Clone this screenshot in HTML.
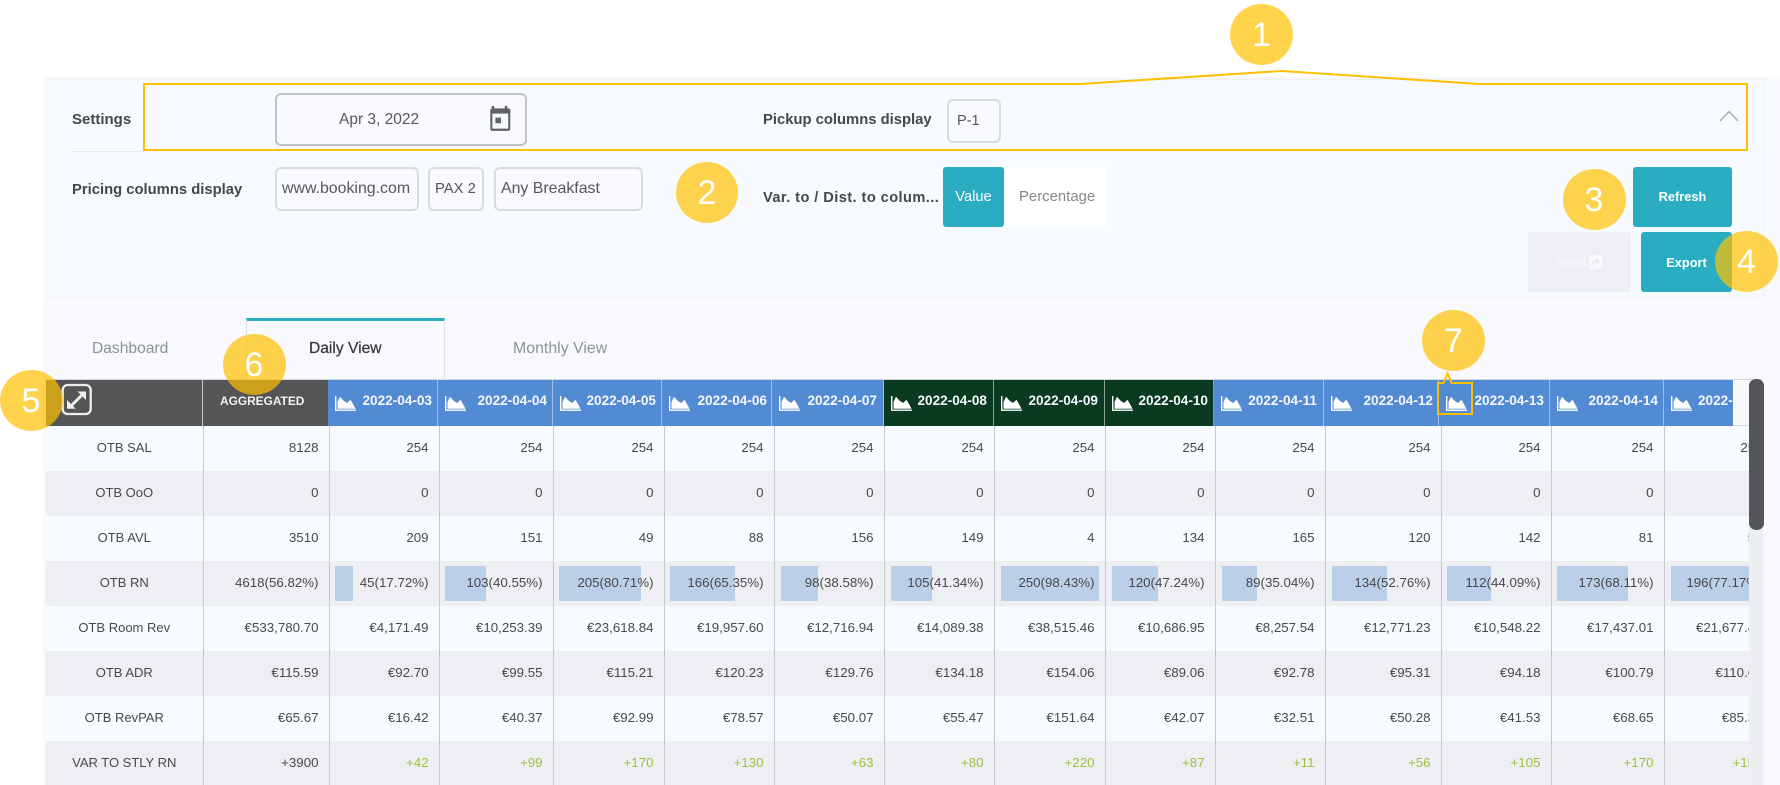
<!DOCTYPE html>
<html><head><meta charset="utf-8"><title>Daily View</title>
<style>
html,body{margin:0;padding:0;background:#fff}
body{width:1780px;height:785px;position:relative;overflow:hidden;font-family:"Liberation Sans",sans-serif;color:#444}
.a{position:absolute;white-space:nowrap}
.bg{left:43px;top:77px;width:1737px;height:708px;background:#f7f9fd}
.panel{left:46px;top:79px;width:1716px;height:217px;border:1px solid #eef0f4;background:#f7fafe}
.lb{font-size:14.8px;font-weight:700;color:#464749;line-height:20px}
.box{box-sizing:border-box;border:2px solid #d8dbe0;border-radius:6px;background:#f8fafe;font-size:15.5px;color:#55575a;line-height:40px;padding-left:5px}
.btn{background:#2badc1;border-radius:3px;color:#fff;font-size:12.8px;font-weight:700;text-align:center;line-height:60px}
.tab{font-size:15.6px;line-height:20px;color:#8d9195}
.hd{top:380px;height:46px;box-sizing:border-box;border-right:1px solid #9fbbe2;background:#528bd4;color:#f4f7fc;font-size:13.6px;font-weight:700;line-height:42px;text-align:right;overflow:hidden}
.hd.g{background:#0a3a1f;border-right-color:#8aa093}
.hd svg{position:absolute;left:6.5px;top:16px}
.tw{left:46px;top:426px;width:1703px;height:359px;overflow:hidden}
table{border-collapse:collapse;table-layout:fixed;width:1728px}
td{height:45px;padding:0 10px 2px 0;text-align:right;font-size:13.3px;color:#48494b;border-right:1px solid #c6c9cd;position:relative;white-space:nowrap;box-sizing:border-box;overflow:visible}
td:first-child{text-align:center;padding:0 0 2px;font-size:13px}
td:last-child{padding-right:11px}
tr:nth-child(odd) td{background:#f7faff}
tr:nth-child(even) td{background:#edeff3}
td i{position:absolute;top:5px;height:35px;background:#bccfe9}
td span{position:relative}
td.p{color:#a2bf3a}
.c{width:63px;height:61px;border-radius:50%;background:rgba(255,192,0,.7);color:#fff;font-size:34px;line-height:63px;text-align:center;z-index:10}
</style></head><body>
<svg width="0" height="0" style="position:absolute"><defs>
<g id="ic"><path d="M.7 0V14.2H21" fill="none" stroke="#fff" stroke-width="1.4"/><path d="M2.5 12.8V6L5 .8 8.5 4.6 12 7 15.5 3.8 18.8 9.5 20.5 12.8Z" fill="#fff"/></g>
</defs></svg>

<div class="a bg"></div>
<div class="a panel"></div>

<div class="a lb" style="left:72px;top:110px;font-size:15px">Settings</div>
<div class="a" style="left:72px;top:151px;width:72px;height:1px;background:#e6e8ec"></div>
<div class="a box" style="left:275px;top:93px;width:252px;height:53px;border-color:#bfc2c7;line-height:49px;font-size:15.5px;padding-left:62px">Apr 3, 2022</div>
<svg class="a" style="left:489px;top:105px" width="24" height="27" viewBox="0 0 24 27"><path d="M4 1v4M17 1v4" stroke="#5c5e62" stroke-width="2.4"/><rect x="1.3" y="3.4" width="20" height="22.5" rx="2" fill="#606266"/><rect x="3.4" y="8.6" width="15.8" height="15" fill="#f7fafe"/><rect x="6.4" y="12.6" width="5.6" height="5.6" fill="#606266"/></svg>
<div class="a lb" style="left:763px;top:110px">Pickup columns display</div>
<div class="a box" style="left:947px;top:99px;width:54px;height:44px;padding-left:8px;font-size:14.5px">P-1</div>
<svg class="a" style="left:1719px;top:110px" width="20" height="12"><path d="M1 11 10 1.5 19 11" fill="none" stroke="#a9abae" stroke-width="1.4"/></svg>

<div class="a lb" style="left:72px;top:180px">Pricing columns display</div>
<div class="a box" style="left:275px;top:167px;width:144px;height:44px;font-size:15.9px">www.booking.com</div>
<div class="a box" style="left:428px;top:167px;width:56px;height:44px;font-size:14.8px">PAX 2</div>
<div class="a box" style="left:494px;top:167px;width:149px;height:44px;font-size:15.9px">Any Breakfast</div>
<div class="a lb" style="left:763px;top:188px;font-size:14.6px;letter-spacing:.43px">Var. to / Dist. to colum...</div>
<div class="a btn" style="left:943px;top:167px;width:61px;height:60px;font-weight:400;font-size:14.7px">Value</div>
<div class="a" style="left:1004px;top:167px;width:103px;height:60px;background:#fff;border-radius:0 3px 3px 0;color:#85888c;font-size:14.9px;line-height:60px;padding-left:15px;box-sizing:border-box">Percentage</div>
<div class="a btn" style="left:1633px;top:167px;width:99px;height:60px">Refresh</div>
<div class="a" style="left:1528px;top:232px;width:103px;height:60px;background:#edeff3;border-radius:3px"></div>
<div class="a" style="left:1555px;top:253px;color:#f4f5f7;font-size:12.8px;font-weight:700;line-height:20px">Send</div>
<svg class="a" style="left:1589px;top:255px" width="13" height="14"><rect width="13" height="14" rx="2" fill="#f8f9fb"/><path d="M3 11C3 7 6 6 9 6M7 3.5 10 6 7 8.5" fill="none" stroke="#e3e6ea" stroke-width="1.3"/></svg>
<div class="a btn" style="left:1641px;top:232px;width:91px;height:60px;line-height:62px">Export</div>

<div class="a tab" style="left:92px;top:339px">Dashboard</div>
<div class="a" style="left:246px;top:318px;width:199px;height:62px;border:1px solid #dde0e5;border-top:3px solid #2badc1;box-sizing:border-box"></div>
<div class="a tab" style="left:309px;top:339px;color:#37393c;-webkit-text-stroke:.25px #37393c">Daily View</div>
<div class="a tab" style="left:513px;top:339px;font-size:15.9px">Monthly View</div>

<div class="a" style="left:46px;top:379px;width:1717px;height:1px;background:#d5d8dc"></div>
<div class="a" style="left:46px;top:380px;width:1703px;height:46px;border-bottom:1px solid #d5d8dc;box-sizing:border-box"></div>

<div class="a" style="left:46px;top:380px;width:157px;height:46px;background:#545557;border-right:1px solid #c4c6c8;box-sizing:border-box"></div>
<div class="a" style="left:203px;top:380px;width:125px;height:46px;background:#545557;color:#f2f2f2;font-size:11.9px;font-weight:700;line-height:42px;padding-left:17px;box-sizing:border-box">AGGREGATED</div>
<svg class="a" style="left:60px;top:383px" width="33" height="34" viewBox="0 0 33 34"><rect x="2.7" y="2" width="28" height="29" rx="5" fill="none" stroke="#eeeeee" stroke-width="2.3"/><path d="M10 24 23 11" stroke="#eeeeee" stroke-width="3"/><path d="M17.5 8.5H26V17ZM7 17V25.7H15.7Z" fill="#eeeeee"/></svg>

<div class="a hd" style="left:328px;width:110px;padding-right:5px"><svg width="22" height="15"><use href="#ic"/></svg>2022-04-03</div>
<div class="a hd" style="left:438px;width:115px;padding-right:5px"><svg width="22" height="15"><use href="#ic"/></svg>2022-04-04</div>
<div class="a hd" style="left:553px;width:109px;padding-right:5px"><svg width="22" height="15"><use href="#ic"/></svg>2022-04-05</div>
<div class="a hd" style="left:662px;width:110px;padding-right:4px"><svg width="22" height="15"><use href="#ic"/></svg>2022-04-06</div>
<div class="a hd" style="left:772px;width:112px;padding-right:6px"><svg width="22" height="15"><use href="#ic"/></svg>2022-04-07</div>
<div class="a hd g" style="left:884px;width:110px;padding-right:6px"><svg width="22" height="15"><use href="#ic"/></svg>2022-04-08</div>
<div class="a hd g" style="left:994px;width:111px;padding-right:6px"><svg width="22" height="15"><use href="#ic"/></svg>2022-04-09</div>
<div class="a hd g" style="left:1105px;width:109px;padding-right:5px"><svg width="22" height="15"><use href="#ic"/></svg>2022-04-10</div>
<div class="a hd" style="left:1214px;width:110px;padding-right:6px"><svg width="22" height="15"><use href="#ic"/></svg>2022-04-11</div>
<div class="a hd" style="left:1324px;width:115px;padding-right:5px"><svg width="22" height="15"><use href="#ic"/></svg>2022-04-12</div>
<div class="a hd" style="left:1439px;width:111px;padding-right:5px"><svg width="22" height="15"><use href="#ic"/></svg>2022-04-13</div>
<div class="a hd" style="left:1550px;width:114px;padding-right:5px"><svg width="22" height="15"><use href="#ic"/></svg>2022-04-14</div>
<div class="a hd" style="left:1664px;width:69px;border-right:0;text-align:left;padding-left:34px"><svg width="22" height="15"><use href="#ic"/></svg>2022-04-15</div>

<div class="a tw"><table>
<colgroup><col style="width:157px"><col style="width:126px"><col style="width:110px"><col style="width:114px"><col style="width:111px"><col style="width:110px"><col style="width:110px"><col style="width:110px"><col style="width:111px"><col style="width:110px"><col style="width:110px"><col style="width:116px"><col style="width:110px"><col style="width:113px"><col style="width:110px"></colgroup>
<tr><td>OTB SAL</td><td>8128</td><td>254</td><td>254</td><td>254</td><td>254</td><td>254</td><td>254</td><td>254</td><td>254</td><td>254</td><td>254</td><td>254</td><td>254</td><td>254</td></tr>
<tr><td>OTB OoO</td><td>0</td><td>0</td><td>0</td><td>0</td><td>0</td><td>0</td><td>0</td><td>0</td><td>0</td><td>0</td><td>0</td><td>0</td><td>0</td><td>0</td></tr>
<tr><td>OTB AVL</td><td>3510</td><td>209</td><td>151</td><td>49</td><td>88</td><td>156</td><td>149</td><td>4</td><td>134</td><td>165</td><td>120</td><td>142</td><td>81</td><td>58</td></tr>
<tr><td>OTB RN</td><td>4618(56.82%)</td>
<td><i style="left:5px;width:18px"></i><span>45(17.72%)</span></td>
<td><i style="left:5px;width:41px"></i><span>103(40.55%)</span></td>
<td><i style="left:5px;width:82px"></i><span>205(80.71%)</span></td>
<td><i style="left:5px;width:65px"></i><span>166(65.35%)</span></td>
<td><i style="left:6px;width:37px"></i><span>98(38.58%)</span></td>
<td><i style="left:6px;width:41px"></i><span>105(41.34%)</span></td>
<td><i style="left:6px;width:98px"></i><span>250(98.43%)</span></td>
<td><i style="left:6px;width:46px"></i><span>120(47.24%)</span></td>
<td><i style="left:6px;width:35px"></i><span>89(35.04%)</span></td>
<td><i style="left:6px;width:55px"></i><span>134(52.76%)</span></td>
<td><i style="left:5px;width:44px"></i><span>112(44.09%)</span></td>
<td><i style="left:5px;width:71px"></i><span>173(68.11%)</span></td>
<td><i style="left:6px;width:78px"></i><span>196(77.17%)</span></td></tr>
<tr><td>OTB Room Rev</td><td>€533,780.70</td><td>€4,171.49</td><td>€10,253.39</td><td>€23,618.84</td><td>€19,957.60</td><td>€12,716.94</td><td>€14,089.38</td><td>€38,515.46</td><td>€10,686.95</td><td>€8,257.54</td><td>€12,771.23</td><td>€10,548.22</td><td>€17,437.01</td><td>€21,677.45</td></tr>
<tr><td>OTB ADR</td><td>€115.59</td><td>€92.70</td><td>€99.55</td><td>€115.21</td><td>€120.23</td><td>€129.76</td><td>€134.18</td><td>€154.06</td><td>€89.06</td><td>€92.78</td><td>€95.31</td><td>€94.18</td><td>€100.79</td><td>€110.60</td></tr>
<tr><td>OTB RevPAR</td><td>€65.67</td><td>€16.42</td><td>€40.37</td><td>€92.99</td><td>€78.57</td><td>€50.07</td><td>€55.47</td><td>€151.64</td><td>€42.07</td><td>€32.51</td><td>€50.28</td><td>€41.53</td><td>€68.65</td><td>€85.35</td></tr>
<tr><td>VAR TO STLY RN</td><td>+3900</td><td class="p">+42</td><td class="p">+99</td><td class="p">+170</td><td class="p">+130</td><td class="p">+63</td><td class="p">+80</td><td class="p">+220</td><td class="p">+87</td><td class="p">+11</td><td class="p">+56</td><td class="p">+105</td><td class="p">+170</td><td class="p">+155</td></tr>
</table></div>

<div class="a" style="left:1749px;top:380px;width:14px;height:405px;background:#eceef2"></div>
<div class="a" style="left:1749px;top:379px;width:14.5px;height:151px;background:#555658;border-radius:7px"></div>

<svg class="a" style="left:0;top:0;z-index:9" width="1780" height="785"><path d="M144 84H1080L1281.6 71 1480 84H1747V150H144Z" fill="none" stroke="#fcc000" stroke-width="2"/><path d="M1438 383H1443.5L1447.7 373.5 1451.5 383H1472V414H1438Z" fill="none" stroke="#fcc000" stroke-width="2"/></svg>

<div class="a c" style="left:1230px;top:3.5px">1</div>
<div class="a c" style="left:676px;top:162px;width:62px">2</div>
<div class="a c" style="left:1562.5px;top:169px">3</div>
<div class="a c" style="left:1715px;top:231px">4</div>
<div class="a c" style="left:-.5px;top:370px">5</div>
<div class="a c" style="left:222.5px;top:333.5px">6</div>
<div class="a c" style="left:1422px;top:310px">7</div>
</body></html>
